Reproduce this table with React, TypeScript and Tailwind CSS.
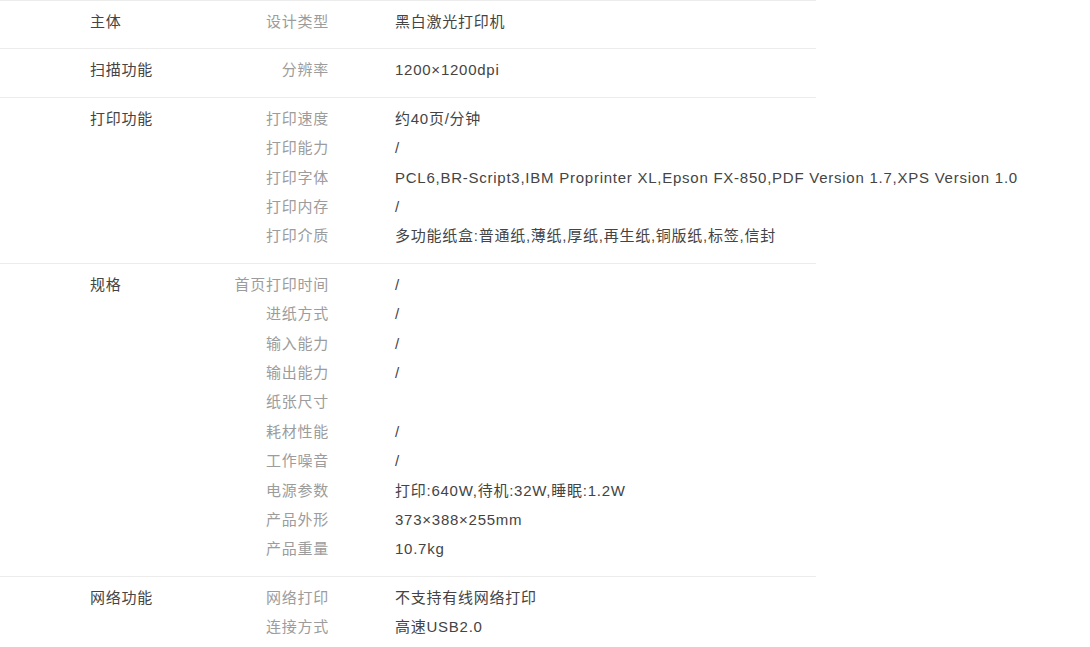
const sections: { group: string; rows: [string, string][] }[] = [
  { group: "主体", rows: [["设计类型", "黑白激光打印机"]] },
  { group: "扫描功能", rows: [["分辨率", "1200×1200dpi"]] },
  {
    group: "打印功能",
    rows: [
      ["打印速度", "约40页/分钟"],
      ["打印能力", "/"],
      ["打印字体", "PCL6,BR-Script3,IBM Proprinter XL,Epson FX-850,PDF Version 1.7,XPS Version 1.0"],
      ["打印内存", "/"],
      ["打印介质", "多功能纸盒:普通纸,薄纸,厚纸,再生纸,铜版纸,标签,信封"],
    ],
  },
  {
    group: "规格",
    rows: [
      ["首页打印时间", "/"],
      ["进纸方式", "/"],
      ["输入能力", "/"],
      ["输出能力", "/"],
      ["纸张尺寸", ""],
      ["耗材性能", "/"],
      ["工作噪音", "/"],
      ["电源参数", "打印:640W,待机:32W,睡眠:1.2W"],
      ["产品外形", "373×388×255mm"],
      ["产品重量", "10.7kg"],
    ],
  },
  {
    group: "网络功能",
    rows: [
      ["网络打印", "不支持有线网络打印"],
      ["连接方式", "高速USB2.0"],
    ],
  },
];

export default function App() {
  return (
    <div
      className="min-h-[647px] w-[1090px] bg-white text-[15px] tracking-[0.75px]"
      style={{ fontFamily: '"Liberation Sans", "Noto Sans CJK SC", sans-serif' }}
    >
      {sections.map((s) => (
        <div key={s.group} className="flex w-[816px] border-t border-[#ececec] pt-[6px] pb-[12px] leading-[29.4px]">
          <div className="w-[190px] shrink-0 pl-[90px] text-[#444]">{s.group}</div>
          <div className="flex flex-col">
            {s.rows.map(([label, value]) => (
              <div key={label} className="flex h-[29.4px]">
                <div className="w-[139px] shrink-0 text-right text-[#9c9c9c]">{label}</div>
                <div className="ml-[66px] whitespace-nowrap text-[#444]">{value}</div>
              </div>
            ))}
          </div>
        </div>
      ))}
    </div>
  );
}
